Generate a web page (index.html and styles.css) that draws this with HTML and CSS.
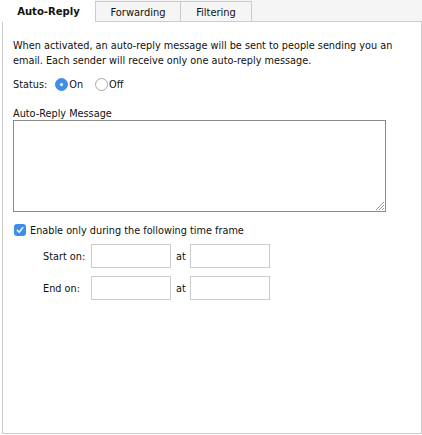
FILE: index.html
```html
<!DOCTYPE html>
<html>
<head>
<meta charset="utf-8">
<link rel="stylesheet" href="styles.css">
</head>
<body>
<div class="tabs">
  <div class="tab active">Auto-Reply</div>
  <div class="tab fwd">Forwarding</div>
  <div class="tab flt">Filtering</div>
</div>
<div class="panel">
  <p class="intro">When activated, an auto-reply message will be sent to people sending you an email. Each sender will receive only one auto-reply message.</p>
  <div class="status">
    <span class="status-label">Status:</span>
    <span class="radio on"></span><span class="opt">On</span>
    <span class="radio"></span><span class="opt">Off</span>
  </div>
  <div class="msg-label">Auto-Reply Message</div>
  <div class="textarea">
    <svg class="grip" width="10" height="10" viewBox="0 0 10 10">
      <path d="M9 1 L1 9 M9 4 L4 9 M9 7 L7 9" stroke="#999" stroke-width="1" fill="none"/>
    </svg>
  </div>
  <div class="enable">
    <span class="check"><svg width="12" height="12" viewBox="0 0 12 12"><path d="M3.3 6.3 L5.2 8.2 L8.8 3.6" stroke="#fff" stroke-width="1.4" fill="none" stroke-linecap="round" stroke-linejoin="round"/></svg></span>
    <span>Enable only during the following time frame</span>
  </div>
  <div class="time-row">
    <span class="tlabel">Start on:</span>
    <span class="field"></span>
    <span class="at">at</span>
    <span class="field"></span>
  </div>
  <div class="time-row">
    <span class="tlabel">End on:</span>
    <span class="field"></span>
    <span class="at">at</span>
    <span class="field"></span>
  </div>
</div>
</body>
</html>
```
FILE: styles.css
```css
html, body {
  margin: 0;
  padding: 0;
  background: #fff;
}
body {
  font-family: "DejaVu Sans Condensed", "DejaVu Sans", sans-serif;
  font-size: 10.8px;
  color: #111;
  width: 422px;
  height: 435px;
  overflow: hidden;
}
.tabs {
  display: flex;
  height: 22px;
  margin-left: 2px;
  background: #f5f5f5;
  border-bottom: 1px solid #cccccc;
  box-sizing: border-box;
  width: 420px;
}
.tab {
  box-sizing: border-box;
  text-align: center;
  font-size: 11px;
}
.tab.active {
  width: 93px;
  height: 22px;
  background: #fff;
  font-weight: bold;
  font-size: 11.2px;
  line-height: 24px;
}
.tab.fwd {
  width: 86px;
  margin-top: 1px;
  height: 20px;
  border: 1px solid #cccccc;
  border-bottom: none;
  line-height: 21px;
}
.tab.flt {
  width: 71px;
  margin-top: 1px;
  height: 20px;
  border: 1px solid #cccccc;
  border-left: none;
  border-bottom: none;
  line-height: 21px;
}
.panel {
  margin-left: 2px;
  width: 420px;
  height: 412px;
  box-sizing: border-box;
  border: 1px solid #cccccc;
  border-top: none;
  padding: 16px 0 0 10px;
}
.intro {
  margin: 0;
  line-height: 15px;
  width: 395px;
}
.status {
  display: flex;
  align-items: center;
  margin-top: 9px;
  height: 14px;
}
.status-label {
  margin-right: 8px;
}
.radio {
  width: 11px;
  height: 11px;
  border-radius: 50%;
  border: 1px solid #a8a8a8;
  background: #fff;
  box-sizing: content-box;
  display: inline-block;
  margin-right: 1px;
}
.radio.on {
  background: #3f8fe8;
  border-color: #3f8fe8;
  position: relative;
}
.radio.on::after {
  content: "";
  position: absolute;
  left: 4px;
  top: 4px;
  width: 3px;
  height: 3px;
  border-radius: 50%;
  background: #fff;
}
.opt {
  margin-right: 12px;
}
.msg-label {
  margin-top: 16px;
  line-height: 13px;
}
.textarea {
  margin-top: 0;
  width: 373px;
  height: 92px;
  box-sizing: border-box;
  border: 1px solid #8a8a8a;
  position: relative;
}
.grip {
  position: absolute;
  right: 0;
  bottom: 0;
}
.enable {
  display: flex;
  align-items: center;
  margin-top: 11px;
  margin-left: 1px;
  height: 14px;
}
.check {
  width: 12px;
  height: 12px;
  border-radius: 3px;
  background: #3f8fe8;
  display: inline-flex;
  margin-right: 4px;
}
.time-row {
  display: flex;
  align-items: center;
  margin-left: 30px;
  margin-top: 8px;
  height: 24px;
}
.enable + .time-row {
  margin-top: 7px;
}
.tlabel {
  width: 48px;
}
.field {
  width: 80px;
  height: 24px;
  box-sizing: border-box;
  border: 1px solid #cccccc;
  display: inline-block;
}
.at {
  width: 19px;
  padding-left: 5px;
  box-sizing: border-box;
}
```
